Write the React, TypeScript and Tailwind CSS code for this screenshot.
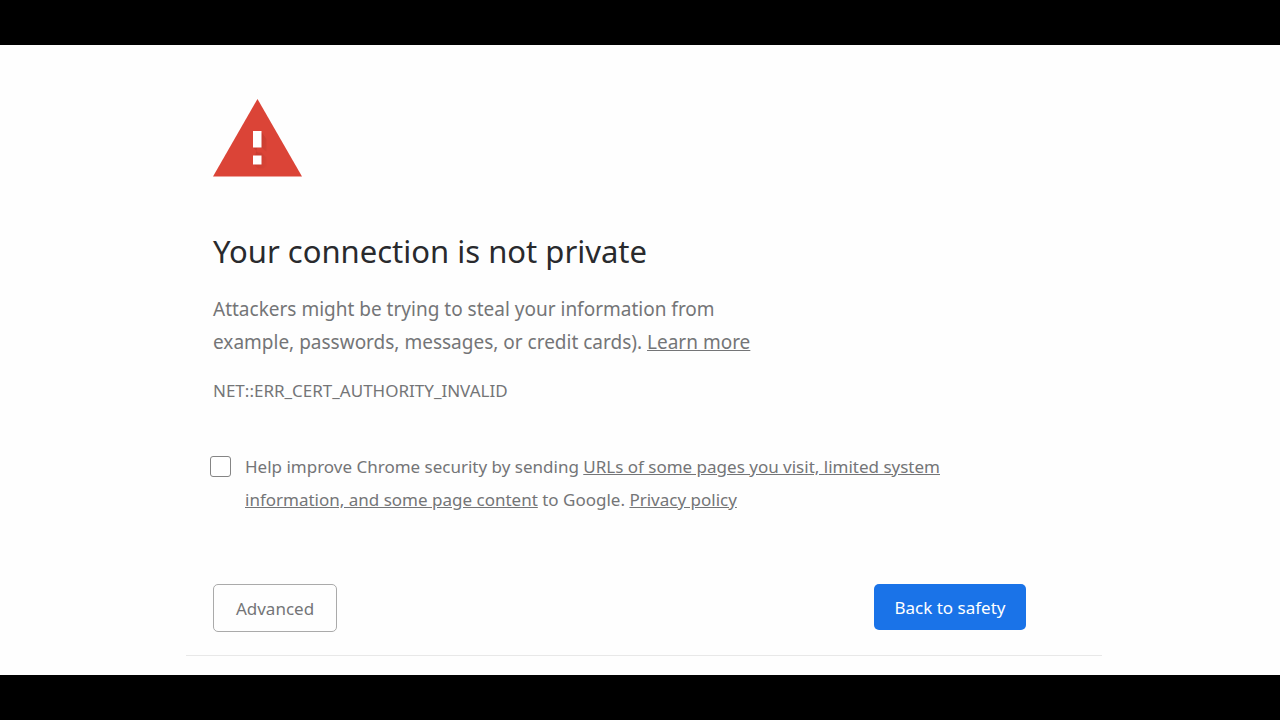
export default function App() {
  return (
    <div className="flex min-h-screen flex-col bg-black font-['Noto_Sans',sans-serif] text-[#747577]">
      <main className="my-[45px] grow bg-[#fefefe] pr-[178px] pl-[186px]">
        <section className="border-b border-[#e8e8e8] pr-[76px] pl-[27px] pt-[54px] pb-[23px]">
          <svg className="h-[78px] w-[89px]" viewBox="0 0 89 78" role="img" aria-label="Warning">
            <defs>
              <linearGradient id="shade" x1="0" y1="0" x2="1" y2="1">
                <stop offset="0" stopColor="#a52f25" stopOpacity="0.6" />
                <stop offset="1" stopColor="#b8382c" stopOpacity="0.1" />
              </linearGradient>
            </defs>
            <path d="M44.500 0 89 77.500H0Z" fill="#db4437" />
            <path d="M48.500 33l5 7v13l-5-4.500H40l5 5h3.500l5 5v9l-3 2H45l-5-5Z" fill="url(#shade)" />
            <path d="M40 32h8.500v16.500H40zM40 56.500h8.500v9H40z" fill="#fff" />
          </svg>
          <h1 className="mt-[51px] text-[31px] leading-[46px] text-[#292a2d]">Your connection is not private</h1>
          <p className="mt-[19px] text-[19px] leading-[33px]">
            Attackers might be trying to steal your information from
            <br />
            example, passwords, messages, or credit cards). <a href="#learn" className="underline">Learn more</a>
          </p>
          <p className="mt-5 text-[17px] leading-6">NET::ERR_CERT_AUTHORITY_INVALID</p>
          <div className="mt-[47px] -ml-[3px] flex gap-3.5">
            <input id="improve" type="checkbox" className="mt-1.5 size-[21px] shrink-0 appearance-none rounded-[3px] border border-[#858585] bg-white checked:bg-[#1a73e8]" />
            <label htmlFor="improve" className="text-[17px] leading-[33px]">
              Help improve Chrome security by sending <a href="#urls" className="underline">URLs of some pages you visit, limited system<br />information, and some page content</a> to Google. <a href="#privacy" className="underline">Privacy policy</a>
            </label>
          </div>
          <div className="mt-[68px] flex items-start justify-between">
            <button type="button" className="h-12 w-[124px] rounded-[5px] border border-[#aaa] pt-0.5 text-[17px]">Advanced</button>
            <button type="button" className="h-[46px] w-[152px] rounded-[5px] bg-[#1a73e8] pt-0.5 text-[17px] text-white">Back to safety</button>
          </div>
        </section>
      </main>
    </div>
  );
}
